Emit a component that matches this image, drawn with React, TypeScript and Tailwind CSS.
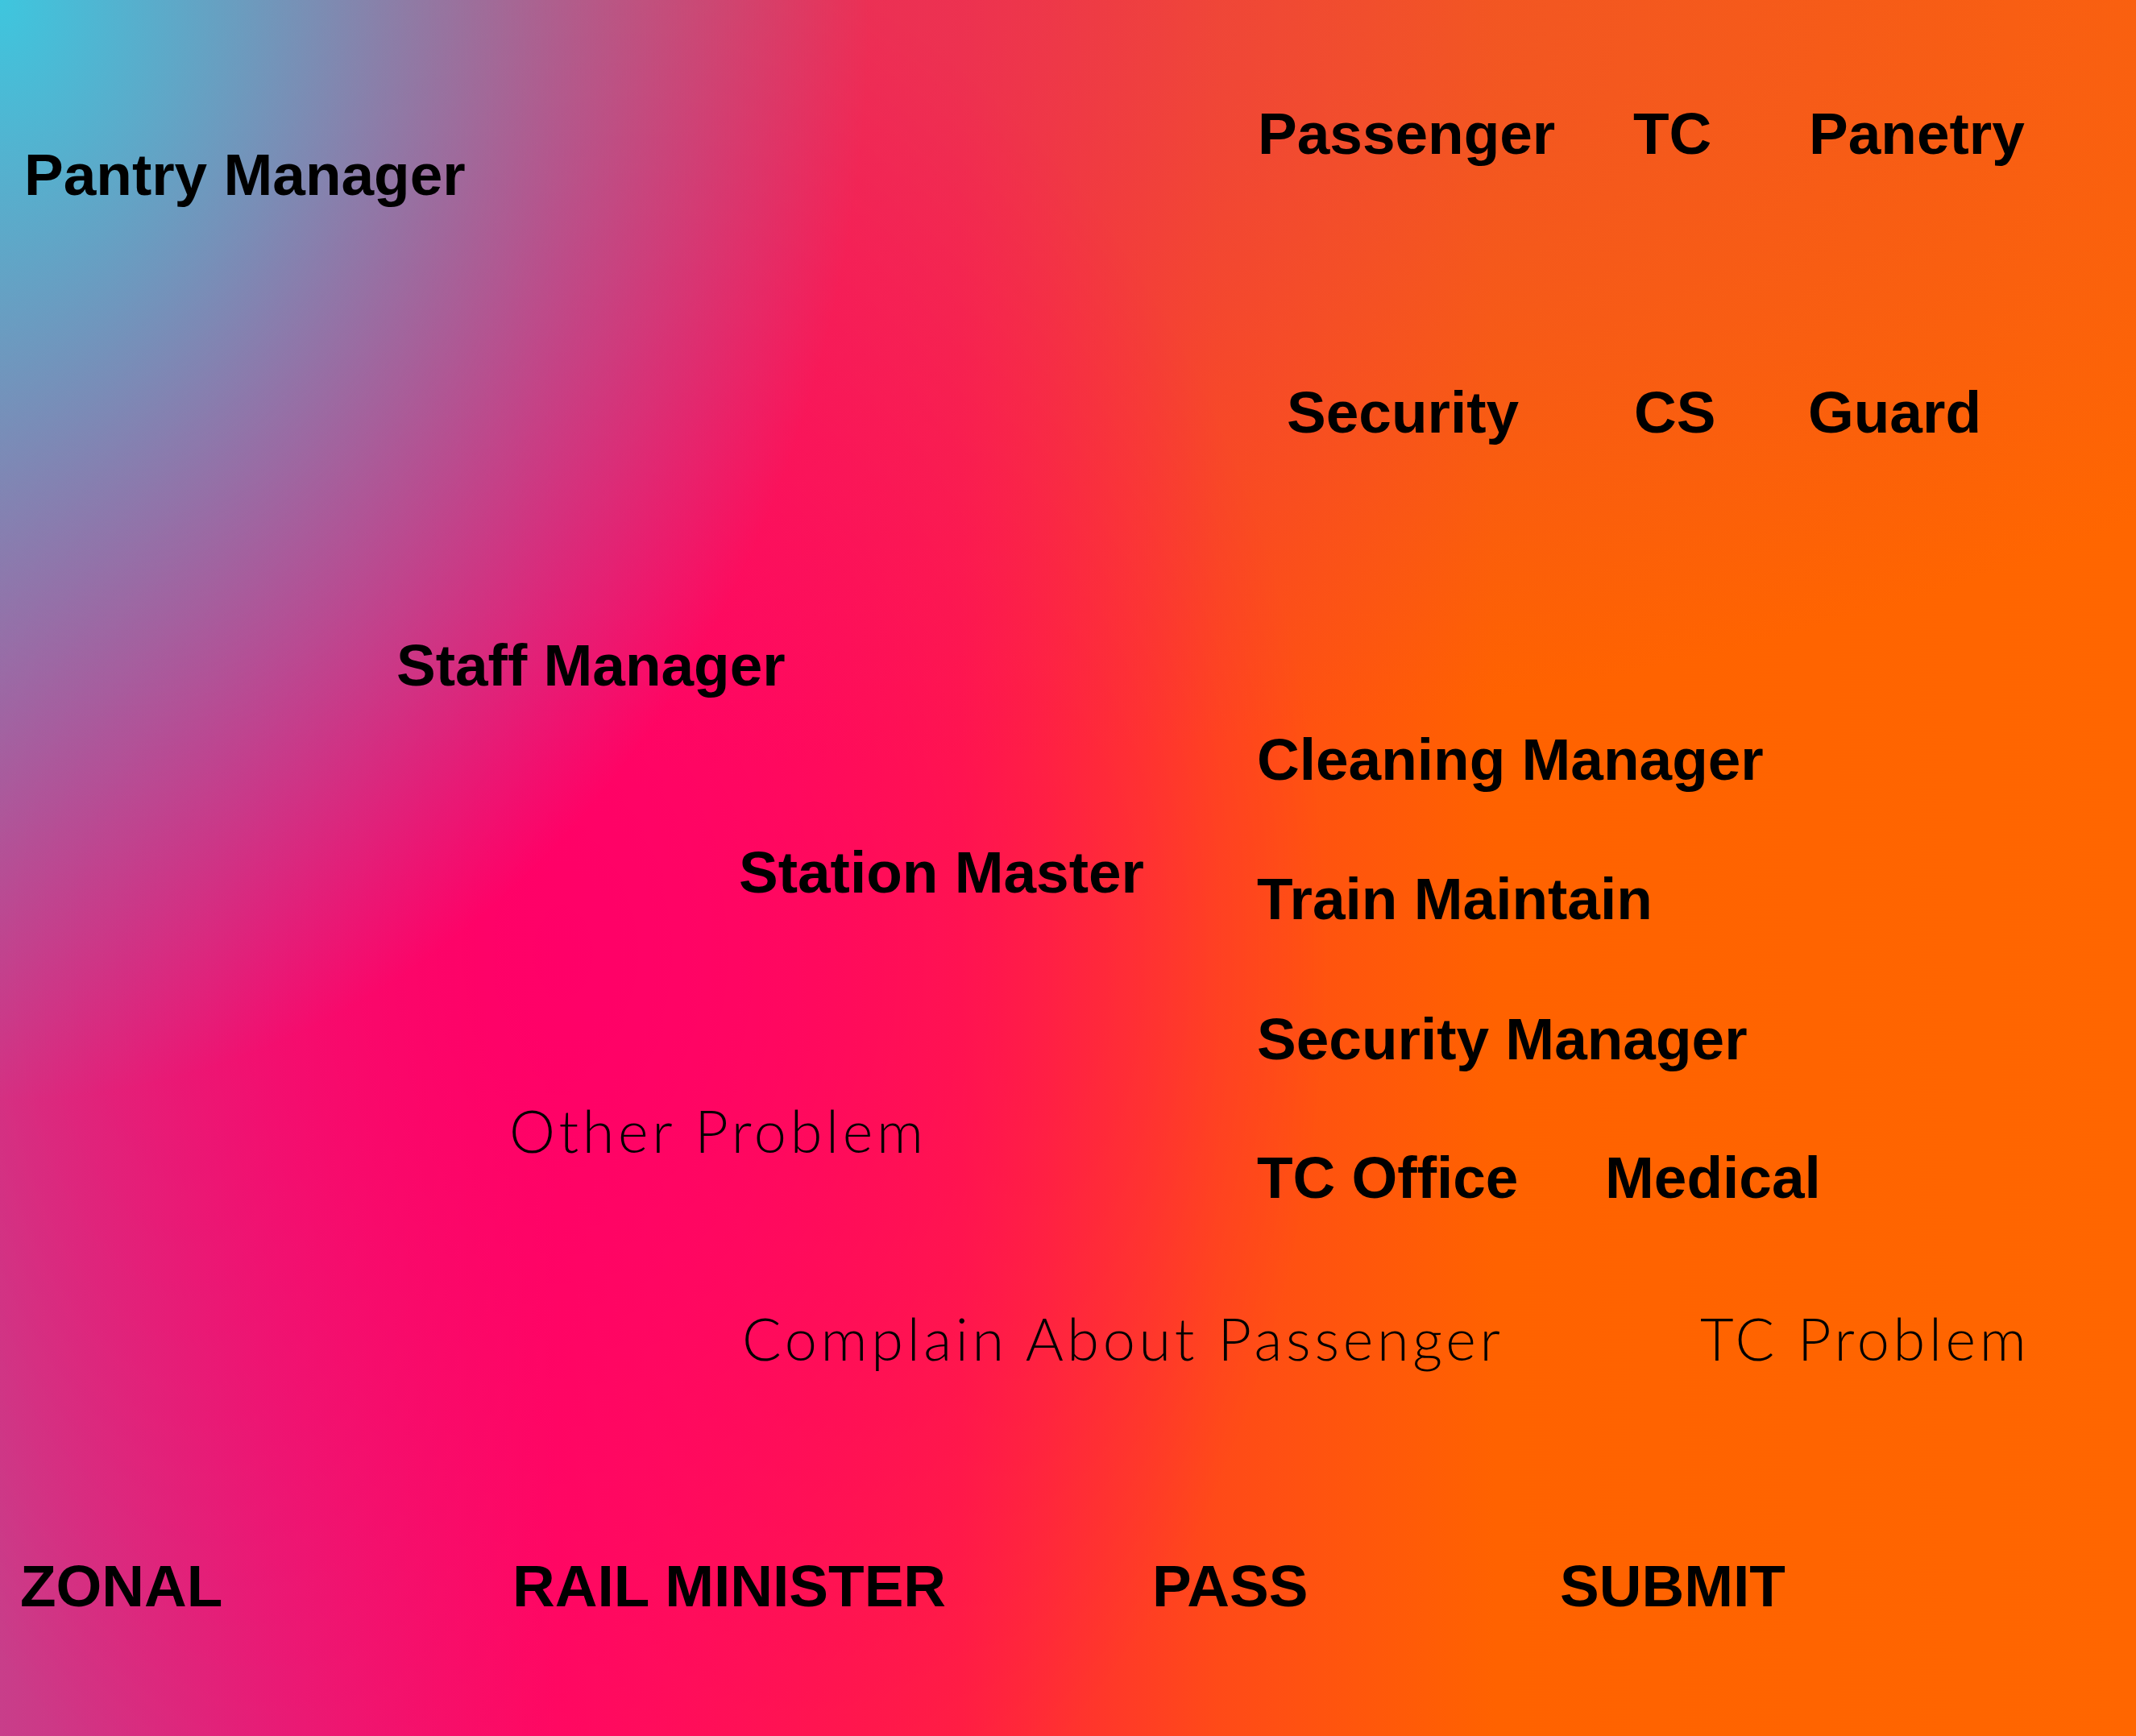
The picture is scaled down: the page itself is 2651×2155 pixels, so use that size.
import React from "react";

// labels on the gradient board
const bold = "font-['Liberation_Sans',Arial,sans-serif] font-bold text-[73px] leading-none text-black whitespace-nowrap";
const thin = "font-['Lato','Open_Sans',sans-serif] font-light text-[72px] tracking-[4.7px] leading-none text-black whitespace-nowrap";

export default function App() {
  return (
    <div className="min-h-screen w-full overflow-hidden [background-image:radial-gradient(ellipse_1500px_1900px_at_0%_0%,#3ec6de_0%,rgba(62,198,222,0.55)_32%,rgba(62,198,222,0)_72%),radial-gradient(ellipse_950px_1300px_at_700px_1183px,#ff0068_0%,rgba(255,0,104,0.5)_45%,rgba(255,0,104,0)_100%),radial-gradient(ellipse_2400px_950px_at_900px_0px,rgba(220,65,95,0.6)_0%,rgba(220,65,95,0)_100%),linear-gradient(90deg,#c83e8a_0%,#e42078_13%,#ff0a60_26%,#ff2040_45%,#ff4a18_57%,#ff6200_70%,#ff6600_100%)]">
      {/* top area: two columns */}
      <div className="flex items-start h-[1498px]">
        <div className="w-[1558px] shrink-0 flex flex-col">
          <div className={`${bold} mt-[180px] pl-[30px]`}>Pantry Manager</div>
          <div className={`${bold} mt-[536px] pl-[492px]`}>Staff Manager</div>
          <div className={`${bold} mt-[184px] pl-[917px]`}>Station Master</div>
          <div className={`${thin} mt-[248px] pl-[632px]`}>Other Problem</div>
        </div>

        <div className="flex flex-col">
          <div className="flex mt-[129px] pl-[3px]">
            <div className={`${bold} w-[466px]`}>Passenger</div>
            <div className={`${bold} w-[218px]`}>TC</div>
            <div className={bold}>Panetry</div>
          </div>
          <div className="flex mt-[273px] pl-[39px]">
            <div className={`${bold} w-[431px]`}>Security</div>
            <div className={`${bold} w-[216px]`}>CS</div>
            <div className={bold}>Guard</div>
          </div>
          <div className={`${bold} mt-[358px] pl-[2px]`}>Cleaning Manager</div>
          <div className={`${bold} mt-[100px] pl-[2px]`}>Train Maintain</div>
          <div className={`${bold} mt-[101px] pl-[2px]`}>Security Manager</div>
          <div className="flex mt-[99px] pl-[2px]">
            <div className={`${bold} w-[432px]`}>TC Office</div>
            <div className={bold}>Medical</div>
          </div>
        </div>
      </div>

      {/* problem types */}
      <div className="flex mt-[127px] pl-[921px]">
        <div className={`${thin} w-[1189px]`}>Complain About Passenger</div>
        <div className={thin}>TC Problem</div>
      </div>

      {/* action row */}
      <div className="flex mt-[235px] pl-[25px]">
        <div className={`${bold} w-[611px]`}>ZONAL</div>
        <div className={`${bold} w-[794px]`}>RAIL MINISTER</div>
        <div className={`${bold} w-[506px]`}>PASS</div>
        <div className={bold}>SUBMIT</div>
      </div>
    </div>
  );
}
